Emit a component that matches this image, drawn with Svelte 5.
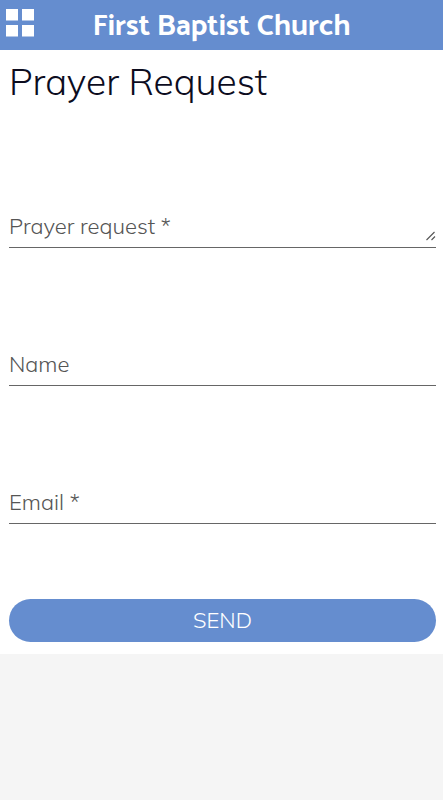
<script>
	let request = $state('');
	let name = $state('');
	let email = $state('');

	function send(event) {
		event.preventDefault();
	}
</script>

<header class="topbar">
	<button class="menu" type="button" aria-label="Menu">
		<svg viewBox="0 0 28 28" width="28" height="28" fill="#fff">
			<rect x="0" y="0" width="12" height="11.5" />
			<rect x="16" y="0" width="12" height="11.5" />
			<rect x="0" y="16" width="12" height="11.5" />
			<rect x="16" y="16" width="12" height="11.5" />
		</svg>
	</button>
	<span class="church">First Baptist Church</span>
</header>

<main>
	<h1>Prayer Request</h1>
	<form onsubmit={send}>
		<div class="field">
			<label for="request" class:hidden={request}>Prayer request *</label>
			<textarea id="request" rows="1" bind:value={request}></textarea>
			<svg class="grip" viewBox="0 0 10 10" width="10" height="10" stroke="#555" stroke-width="1.1">
				<path d="M0.5 9L8.5 1M5.5 9L9 5.5" />
			</svg>
		</div>
		<div class="field">
			<label for="name" class:hidden={name}>Name</label>
			<input id="name" type="text" bind:value={name} />
		</div>
		<div class="field">
			<label for="email" class:hidden={email}>Email *</label>
			<input id="email" type="email" bind:value={email} />
		</div>
		<button class="send" type="submit">SEND</button>
	</form>
</main>

<style>
	:global(body) {
		background: #f5f5f5;
		font-family: Muli, Mulish, Lato, sans-serif;
	}

	.topbar {
		display: grid;
		grid-template-columns: 28px 1fr 28px;
		align-items: center;
		height: 50px;
		padding: 0 6px;
		background: #658dcf;
		color: #fff;
	}

	.menu {
		display: flex;
		padding: 0 0 6px;
		border: none;
		background: none;
		cursor: pointer;
	}

	.church {
		padding-top: 2px;
		font-family: Catamaran, 'Noto Sans', sans-serif;
		font-size: 30px;
		font-weight: 700;
		line-height: 50px;
		text-align: center;
		white-space: nowrap;
	}

	main {
		padding: 8px 7px 12px 9px;
		background: #fff;
	}

	h1 {
		margin: 0 0 6px;
		color: #0c0c1e;
		font-size: 37px;
		font-weight: 300;
		line-height: 46px;
	}

	form {
		display: flex;
		flex-direction: column;
	}

	.field {
		display: grid;
		align-items: end;
		margin-top: 94px;
		border-bottom: 1px solid #666;
	}

	.field > * {
		grid-area: 1 / 1;
	}

	label {
		color: #555;
		font-size: 22px;
		font-weight: 300;
		line-height: 42px;
		pointer-events: none;
		z-index: 1;
	}

	.hidden {
		visibility: hidden;
	}

	input,
	textarea {
		box-sizing: border-box;
		width: 100%;
		height: 43px;
		margin: 0;
		padding: 6px 0;
		border: none;
		outline: none;
		background: none;
		font-family: inherit;
		font-size: 22px;
		resize: none;
	}

	.grip {
		justify-self: end;
		margin-bottom: 6px;
		pointer-events: none;
	}

	.send {
		height: 43px;
		margin-top: 75px;
		padding: 0 0 2px;
		border: none;
		border-radius: 22px;
		background: #658dcf;
		color: #fff;
		font-family: inherit;
		font-size: 22px;
		font-weight: 300;
		cursor: pointer;
	}
</style>
